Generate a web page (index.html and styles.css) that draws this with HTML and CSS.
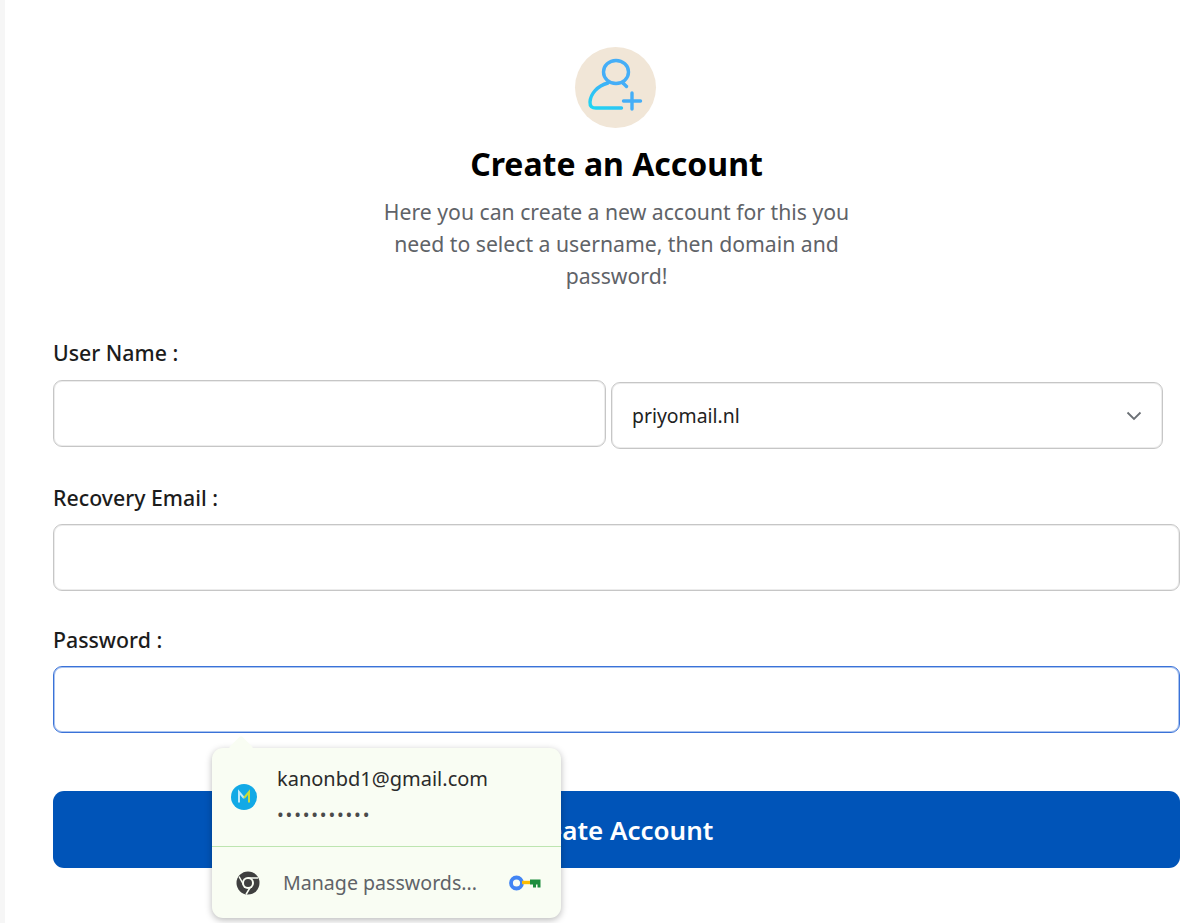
FILE: index.html
```html
<!DOCTYPE html>
<html lang="en">
<head>
<meta charset="utf-8">
<title>Create an Account</title>
<link rel="stylesheet" href="styles.css">
</head>
<body>
<main class="page">
  <header class="intro">
    <div class="avatar">
      <svg viewBox="0 0 81 81" width="81" height="81" fill="none" stroke-linecap="round">
        <defs>
          <linearGradient id="userGrad" x1="0" y1="1" x2="0.6" y2="0">
            <stop offset="0" stop-color="#1fd6f2"/>
            <stop offset="1" stop-color="#3fb0f7"/>
          </linearGradient>
        </defs>
        <ellipse cx="41" cy="25" rx="12.500" ry="11.500" stroke="#45aef7" stroke-width="3.400"/>
        <path d="M33 36 C22 39 15.500 47 15 55 C14.800 59.500 17 61 21 61 L46.500 61" stroke="url(#userGrad)" stroke-width="3.400"/>
        <path d="M48 36 L51.500 39.500" stroke="#45aef7" stroke-width="3.400"/>
        <path d="M57 46 V62 M48.500 54 H65.500" stroke="#45aef7" stroke-width="3.400"/>
      </svg>
    </div>
    <h1 class="title">Create an Account</h1>
    <p class="lead">Here you can create a new account for this you need to select a username, then domain and password!</p>
  </header>

  <form class="form">
    <div class="field field-user">
      <label class="label">User Name :</label>
      <div class="user-row">
        <input class="input" type="text">
        <div class="select">
          <span>priyomail.nl</span>
          <svg viewBox="0 0 16 10" width="16" height="10" fill="none"><path d="M1.500 1.500 L8 8 L14.500 1.500" stroke="#6b7075" stroke-width="1.800"/></svg>
        </div>
      </div>
    </div>
    <div class="field field-email">
      <label class="label">Recovery Email :</label>
      <input class="input" type="text">
    </div>
    <div class="field field-pass">
      <label class="label">Password :</label>
      <div class="input input-focus"></div>
      <div class="popup">
        <span class="popup-arrow"></span>
        <div class="popup-top">
          <span class="badge">
            <svg viewBox="0 0 26 26" width="26" height="26">
              <circle cx="13" cy="13" r="13" fill="#12a9e6"/>
              <path d="M8 18.500 V8 L13 14" fill="none" stroke="#bfe9fb" stroke-width="2"/>
              <path d="M13 14 L18 8 V18.500" fill="none" stroke="#c9dc3a" stroke-width="2"/>
            </svg>
          </span>
          <div class="cred">
            <span class="cred-mail">kanonbd1@gmail.com</span>
            <span class="cred-dots">•••••••••••</span>
          </div>
        </div>
        <div class="popup-bottom">
          <svg class="chrome" viewBox="0 0 24 24" width="24" height="24">
            <circle cx="12" cy="12" r="11.500" fill="#3f3f3f"/>
            <path d="M12 7 H22 M8 14.500 L3 5.500 M15 15 L10 23.500" stroke="#f9fdf3" stroke-width="1.500"/>
            <circle cx="12" cy="12" r="6" fill="#f9fdf3"/>
            <circle cx="12" cy="12" r="4" fill="#3f3f3f"/>
          </svg>
          <span class="manage">Manage passwords...</span>
          <svg class="key" viewBox="0 0 32 16" width="32" height="16" fill="none">
            <circle cx="7.500" cy="8" r="5.500" stroke="#4285f4" stroke-width="3.800"/>
            <path d="M13 7.500 H21" stroke="#fbbc04" stroke-width="3.400"/>
            <path d="M21 4.500 H31.500 V12.500 H28.500 V9.500 H27 V12.500 H24 V9.500 H21 Z" fill="#1e8e3e"/>
          </svg>
        </div>
      </div>
    </div>
    <button class="submit" type="button">Create Account</button>
  </form>
</main>
</body>
</html>
```
FILE: styles.css
```css
* { box-sizing: border-box; }
html, body { margin: 0; height: 923px; overflow: hidden; background: #f6f6f6; }
body { padding-left: 5px; font-family: "Noto Sans", "Open Sans", sans-serif; color: #111; }
.page { height: 923px; background: #fff; padding: 47px 20px 0 48px; }
.intro { display: flex; flex-direction: column; align-items: center; }
.avatar { width: 81px; height: 81px; border-radius: 50%; background: #f1e6d7; margin-right: 2px; }
.avatar svg { display: block; }
.title { margin: 15px 0 0; font-size: 32px; line-height: 41px; font-weight: 700; color: #000; }
.lead { margin: 12px 0 0; width: 490px; text-align: center; font-size: 21.200px; line-height: 32px; color: #5f6368; }
.form { margin-top: 46px; display: flex; flex-direction: column; }
.field { display: flex; flex-direction: column; position: relative; }
.label { font-size: 21.300px; line-height: 29px; font-weight: 500; color: #1c1c1c; height: 28px; }
.field-email { margin-top: 34px; }
.field-email .label { margin-bottom: 13px; }
.field-pass { margin-top: 34px; }
.field-pass .label { margin-bottom: 13px; }
.field-user .label { margin-bottom: 14px; }
.input { display: block; width: 100%; height: 67px; border: 1px solid #c6c6c6; box-shadow: inset 0 0 0 1px #ececec; border-radius: 9px; background: #fff; outline: none; }
.input-focus { border-color: #3a72d8; box-shadow: inset 0 0 0 1px #a9c3ef; }
.user-row { display: flex; align-items: flex-start; width: 1110px; gap: 5px; }
.user-row .input { width: 553px; flex: none; }
.select { margin-top: 2px; flex: none; width: 552px; height: 67px; border: 1px solid #c6c6c6; box-shadow: inset 0 0 0 1px #ececec; border-radius: 9px; display: flex; align-items: center; justify-content: space-between; padding: 0 20px; font-size: 19.400px; color: #222; }
.submit { margin-top: 58px; height: 77px; width: 100%; border: 0; border-radius: 11px; background: #0054b8; color: #fff; font: 600 26px "Noto Sans", sans-serif; }
.popup { position: absolute; left: 159px; top: 123px; width: 349px; height: 170px; background: #f9fdf3; border-radius: 11px; box-shadow: 0 2px 7px rgba(0,0,0,.28); z-index: 2; display: flex; flex-direction: column; }
.popup-arrow { position: absolute; left: 20px; top: -9px; width: 18px; height: 18px; background: #f9fdf3; transform: rotate(45deg); border-radius: 3px; }
.popup-top { position: relative; height: 99px; border-bottom: 1px solid #bde5b0; display: flex; align-items: center; padding-left: 19px; }
.badge { display: flex; }
.cred { margin-left: 20px; display: flex; flex-direction: column; }
.cred-mail { font-size: 20px; line-height: 32px; color: #2b2b2b; }
.cred-dots { font-size: 18px; line-height: 38px; letter-spacing: 1.800px; color: #4a4a4a; height: 36px; }
.popup-bottom { flex: 1; display: flex; align-items: center; padding-left: 24px; }
.manage { margin-left: 23px; font-size: 19.600px; color: #5f6368; }
.key { margin-left: 32px; }
```
